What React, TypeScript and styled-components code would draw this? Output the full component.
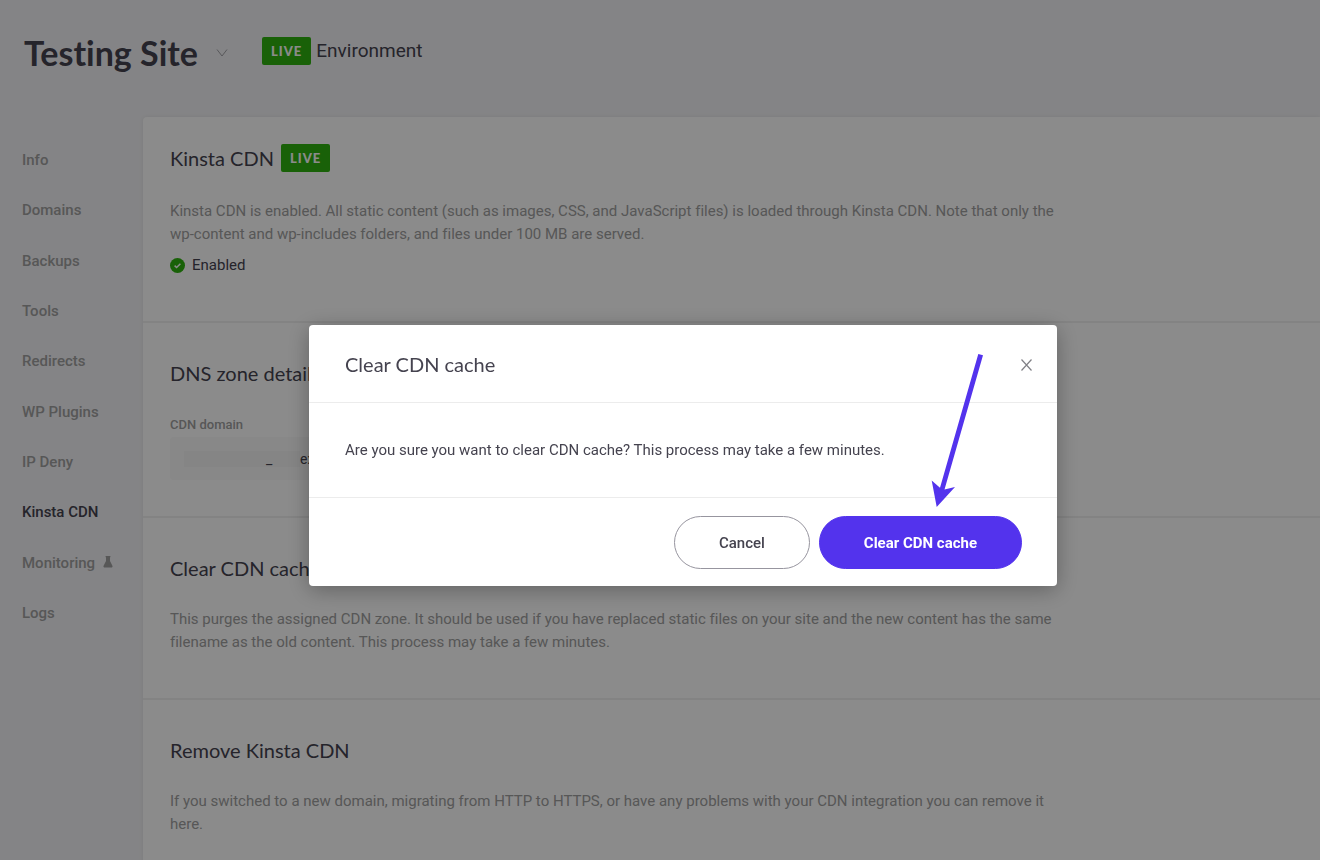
import React from "react";
import styled, { createGlobalStyle } from "styled-components";

const ink = "#45434f";
const muted = "#a0a0a0";
const green = "#2fb30f";
const violet = "#5333ed";
const displayFont = `Lato, "Liberation Sans", sans-serif`;

const GlobalStyle = createGlobalStyle`
  *, *::before, *::after { box-sizing: border-box; }
  body {
    margin: 0;
    overflow: hidden;
    background: #f3f3f6;
    color: ${ink};
    font-family: Roboto, "Liberation Sans", sans-serif;
    font-size: 15px;
    font-variant-ligatures: none;
  }
  h1, h2, p, ul { margin: 0; padding: 0; }
  button, input { font: inherit; color: inherit; }
`;

const Header = styled.header`
  display: flex;
  align-items: center;
  height: 117px;
  padding: 0 24px 12px;
`;

const SiteTitle = styled.h1`
  font-family: ${displayFont};
  font-size: 34px;
  font-weight: 700;
  line-height: 40px;
`;

const SiteSwitch = styled.button`
  display: flex;
  margin: 0 34px 0 18px;
  padding: 0;
  border: 0;
  background: none;
  color: #a0a0a6;
`;

const Environment = styled.div`
  display: flex;
  align-items: center;
  gap: 5px;
  height: 28px;
  margin-bottom: 4px;
  font-size: 19px;
`;

const Badge = styled.span`
  display: flex;
  align-items: center;
  height: 28px;
  padding: 0 9px;
  border-radius: 2px;
  background: ${green};
  color: #fff;
  font: 900 13px/28px ${displayFont};
  letter-spacing: 1px;
`;

const Body = styled.div`
  display: grid;
  grid-template-columns: 143px 1fr;
`;

const Nav = styled.ul`
  display: grid;
  grid-auto-rows: 1fr;
  align-items: center;
  height: 503px;
  margin-top: 18px;
  list-style: none;
`;

const NavLink = styled.a<{ $active?: boolean }>`
  display: flex;
  align-items: center;
  gap: 8px;
  padding-left: 22px;
  color: ${(p) => (p.$active ? ink : muted)};
  font-weight: 500;
  line-height: 24px;
  text-decoration: none;
`;

const Card = styled.main`
  border-radius: 4px 0 0 0;
  background: #fff;
  box-shadow: 0 0 4px rgba(0, 0, 0, 0.08);
`;

const Section = styled.section<{ $compact?: boolean }>`
  padding: 38px 27px ${(p) => (p.$compact ? 36 : 44)}px;
  border-top: 2px solid #f0f0f0;

  &:first-child {
    padding-top: 27px;
    border-top: 0;
  }
`;

const SectionHead = styled.div`
  display: flex;
  align-items: center;
  gap: 7px;
  margin-bottom: 28px;
`;

const Heading = styled.h2`
  font-family: ${displayFont};
  font-size: 20px;
  font-weight: 400;
  line-height: 24px;
`;

const Copy = styled.p`
  max-width: 908px;
  color: ${muted};
  line-height: 23px;
`;

const Status = styled.div`
  display: flex;
  align-items: center;
  gap: 7px;
  margin-top: 7px;
  line-height: 24px;
`;

const FieldLabel = styled.label`
  display: block;
  color: ${muted};
  font-size: 13px;
  font-weight: 500;
  line-height: 24px;
`;

const Field = styled.div`
  display: flex;
  align-items: center;
  width: 440px;
  height: 43px;
  padding: 0 14px;
  border-radius: 4px;
  background: #f9f9f9;
  font-size: 14px;
`;

const Mask = styled.span`
  width: 116px;
  height: 16px;
  padding-left: 82px;
  background: #f4f4f4;
  line-height: 16px;
`;

const DomainInput = styled.input`
  flex: 1;
  min-width: 0;
  padding: 0;
  border: 0;
  background: none;
`;

const Scrim = styled.div`
  position: fixed;
  inset: 0;
  display: flex;
  align-items: center;
  justify-content: center;
  padding: 51px 0 0 46px;
  background: rgba(0, 0, 0, 0.455);
`;

const Dialog = styled.div`
  position: relative;
  width: 748px;
  border-radius: 4px;
  background: #fff;
  box-shadow: 0 4px 22px rgba(0, 0, 0, 0.3);
`;

const DialogHead = styled.div`
  display: flex;
  align-items: center;
  justify-content: space-between;
  height: 78px;
  padding: 0 25px 0 36px;
  border-bottom: 1px solid #ececec;
`;

const CloseButton = styled.button`
  display: flex;
  padding: 2px 0 0;
  border: 0;
  background: none;
  color: #808086;
`;

const DialogText = styled.p`
  padding: 36px 36px 35px;
  border-bottom: 1px solid #ececec;
  line-height: 23px;
`;

const DialogActions = styled.div`
  display: flex;
  justify-content: flex-end;
  gap: 9px;
  padding: 18px 35px 17px;
`;

const Button = styled.button<{ $primary?: boolean }>`
  height: 53px;
  padding: 0 44px;
  border: 1px solid ${(p) => (p.$primary ? violet : "#97959f")};
  border-radius: 27px;
  background: ${(p) => (p.$primary ? violet : "#fff")};
  color: ${(p) => (p.$primary ? "#fff" : ink)};
  font-weight: ${(p) => (p.$primary ? 700 : 500)};
`;

const Pointer = styled.svg`
  position: absolute;
  top: 29px;
  right: 74px;
  pointer-events: none;
`;

const navItems = [
  "Info",
  "Domains",
  "Backups",
  "Tools",
  "Redirects",
  "WP Plugins",
  "IP Deny",
  "Kinsta CDN",
  "Monitoring",
  "Logs",
];

const Flask = () => (
  <svg width="10" height="14" viewBox="0 0 10 14" fill="currentColor" aria-hidden="true">
    <path d="M2.600 0h4.800v1.200H7v3.900l2.400 4.600c.5 1-.1 1.800-1.100 1.800H1.700C.7 11.500.1 10.700.6 9.700L3 5.100V1.200h-.4z" />
  </svg>
);

export default function App() {
  return (
    <>
      <GlobalStyle />
      <Header>
        <SiteTitle>Testing Site</SiteTitle>
        <SiteSwitch aria-label="Switch site">
          <svg width="12" height="8" viewBox="0 0 12 8" fill="none" stroke="currentColor">
            <path d="M1 .5l5 6.500 5-6.500" />
          </svg>
        </SiteSwitch>
        <Environment>
          <Badge>LIVE</Badge>
          Environment
        </Environment>
      </Header>
      <Body>
        <nav>
          <Nav>
            {navItems.map((item) => (
              <li key={item}>
                <NavLink href="#" $active={item === "Kinsta CDN"}>
                  {item}
                  {item === "Monitoring" && <Flask />}
                </NavLink>
              </li>
            ))}
          </Nav>
        </nav>
        <Card>
          <Section>
            <SectionHead>
              <Heading>Kinsta CDN</Heading>
              <Badge>LIVE</Badge>
            </SectionHead>
            <Copy>
              Kinsta CDN is enabled. All static content (such as images, CSS, and JavaScript files) is
              loaded through Kinsta CDN. Note that only the wp-content and wp-includes folders, and
              files under 100 MB are served.
            </Copy>
            <Status>
              <svg width="15" height="15" viewBox="0 0 15 15" fill="none" aria-hidden="true">
                <circle cx="7.500" cy="7.500" r="7.500" fill={green} />
                <path d="M4.600 7.600l2 1.900 3.800-3.700" stroke="#fff" strokeWidth="1.500" />
              </svg>
              Enabled
            </Status>
          </Section>
          <Section $compact>
            <SectionHead>
              <Heading>DNS zone details</Heading>
            </SectionHead>
            <FieldLabel htmlFor="cdn-domain">CDN domain</FieldLabel>
            <Field>
              <Mask>_</Mask>
              <DomainInput id="cdn-domain" readOnly defaultValue="ex" />
            </Field>
          </Section>
          <Section>
            <SectionHead>
              <Heading>Clear CDN cache</Heading>
            </SectionHead>
            <Copy>
              This purges the assigned CDN zone. It should be used if you have replaced static files on
              your site and the new content has the same filename as the old content. This process may
              take a few minutes.
            </Copy>
          </Section>
          <Section>
            <SectionHead>
              <Heading>Remove Kinsta CDN</Heading>
            </SectionHead>
            <Copy>
              If you switched to a new domain, migrating from HTTP to HTTPS, or have any problems with
              your CDN integration you can remove it here.
            </Copy>
          </Section>
        </Card>
      </Body>
      <Scrim>
        <Dialog role="dialog" aria-modal="true" aria-labelledby="dialog-title">
          <DialogHead>
            <Heading id="dialog-title">Clear CDN cache</Heading>
            <CloseButton aria-label="Close">
              <svg width="11" height="12" viewBox="0 0 11 12" fill="none" stroke="currentColor" strokeWidth="1.200">
                <path d="M.5.500l10 11M10.500.500l-10 11" />
              </svg>
            </CloseButton>
          </DialogHead>
          <DialogText>
            Are you sure you want to clear CDN cache? This process may take a few minutes.
          </DialogText>
          <DialogActions>
            <Button>Cancel</Button>
            <Button $primary>Clear CDN cache</Button>
          </DialogActions>
          <Pointer width="52" height="154" viewBox="0 0 52 154" fill={violet} aria-hidden="true">
            <path d="M47.300 0l4.700 1.300-38.500 134.200L24 133 5.700 153 .7 126.500l8.300 7.300z" />
          </Pointer>
        </Dialog>
      </Scrim>
    </>
  );
}
